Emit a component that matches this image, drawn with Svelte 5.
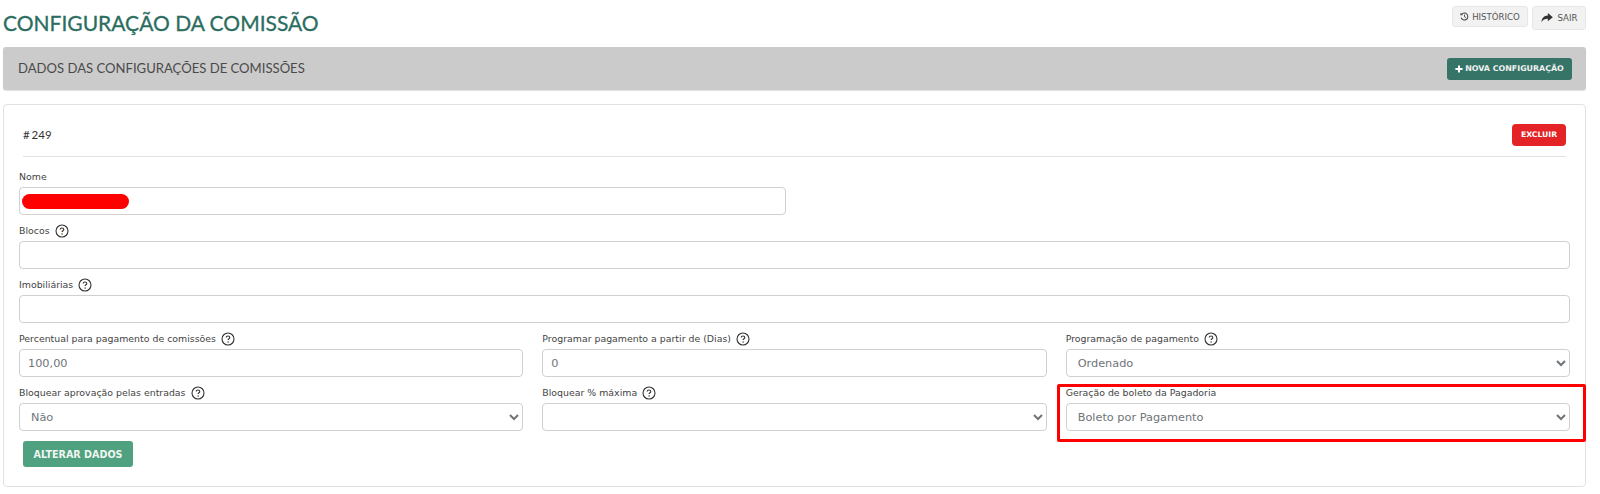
<script lang="ts">
  const topRow = [
    { label: 'Percentual para pagamento de comissões', value: '100,00', help: true },
    { label: 'Programar pagamento a partir de (Dias)', value: '0', help: true },
    { label: 'Programação de pagamento', options: ['Ordenado'], help: true }
  ];
  const bottomRow = [
    { label: 'Bloquear aprovação pelas entradas', options: ['Não'], help: true },
    { label: 'Bloquear % máxima', options: [''], help: true },
    { label: 'Geração de boleto da Pagadoria', options: ['Boleto por Pagamento'], help: false, marked: true }
  ];
</script>

{#snippet help()}
  <svg class="help" viewBox="0 0 14 14" width="14" height="14" aria-hidden="true">
    <circle cx="7" cy="7" r="6" fill="none" stroke="#333" stroke-width="1.1" />
    <path d="M5.2 5.6c0-1 .8-1.6 1.8-1.6s1.8.6 1.8 1.5c0 1.3-1.7 1.3-1.7 2.6" fill="none" stroke="#333" stroke-width="1.1" />
    <circle cx="7.1" cy="10" r=".7" fill="#333" />
  </svg>
{/snippet}

{#snippet field(f)}
  <div class="field" class:marked={f.marked}>
    <label>
      <span class="label-text">{f.label}{#if f.help}{@render help()}{/if}</span>
      {#if f.options}
        <select class="control">
          {#each f.options as o}<option>{o}</option>{/each}
        </select>
      {:else}
        <input class="control" value={f.value ?? ''} />
      {/if}
    </label>
  </div>
{/snippet}

<div class="page">
  <header class="top">
    <h1>CONFIGURAÇÃO DA COMISSÃO</h1>
    <div class="top-actions">
      <button class="btn-light history">
        <svg viewBox="0 0 12 12" width="9" height="9" aria-hidden="true">
          <path d="M2.2 3.2A4.6 4.6 0 1 1 1.5 7.5" fill="none" stroke="#444" stroke-width="1.4" />
          <path d="M.6 1v3.4H4z" fill="#444" />
          <path d="M6 3.4v3l2 1" fill="none" stroke="#444" stroke-width="1.2" />
        </svg>
        HISTÓRICO
      </button>
      <button class="btn-light exit">
        <svg viewBox="0 0 14 12" width="12" height="10" aria-hidden="true">
          <path d="M8 0l6 5-6 5V7C4.500 7 2 8 .5 11c0-4.500 2.500-7.800 7.500-8z" fill="#333" />
        </svg>
        SAIR
      </button>
    </div>
  </header>

  <section class="bar">
    <h2>DADOS DAS CONFIGURAÇÕES DE COMISSÕES</h2>
    <button class="btn-new">
      <svg viewBox="0 0 10 10" width="8" height="8" aria-hidden="true">
        <path d="M5 .5v9M.5 5h9" stroke="#fff" stroke-width="2.400" />
      </svg>
      NOVA CONFIGURAÇÃO
    </button>
  </section>

  <section class="card">
    <div class="card-head">
      <span class="record"># 249</span>
      <button class="btn-delete">EXCLUIR</button>
    </div>

    <div class="form">
      <div class="field name">
        <label>
          <span class="label-text">Nome</span>
          <input class="control" />
        </label>
        <span class="redaction"></span>
      </div>
      {@render field({ label: 'Blocos', value: '', help: true })}
      {@render field({ label: 'Imobiliárias', value: '', help: true })}
      <div class="columns">
        {#each topRow as f}{@render field(f)}{/each}
        {#each bottomRow as f}{@render field(f)}{/each}
      </div>
    </div>

    <button class="btn-save">ALTERAR DADOS</button>
  </section>
</div>

<style>
  :global(body) {
    margin: 0;
    background: #fff;
  }

  .page {
    height: 494px;
    box-sizing: border-box;
    padding: 0 14px 0 3px;
    font-family: "DejaVu Sans", sans-serif;
    color: #333;
  }

  .top {
    display: flex;
    justify-content: space-between;
    align-items: flex-start;
    height: 47px;
  }

  h1 {
    margin: 9px 0 0;
    font: 400 21px/28px Lato, sans-serif;
    color: #2b6d60;
    -webkit-text-stroke: 0.3px #2b6d60;
  }

  .top-actions {
    display: flex;
    align-items: flex-start;
    gap: 4px;
    padding-top: 6px;
  }

  .btn-light {
    display: flex;
    align-items: center;
    justify-content: center;
    gap: 3px;
    padding: 0;
    background: #f2f2f2;
    border: 1px solid #e6e6e6;
    border-radius: 3px;
    font: 400 8.600px "DejaVu Sans", sans-serif;
    color: #555;
  }

  .history {
    width: 76px;
    height: 21px;
  }

  .exit {
    width: 54px;
    height: 24px;
    gap: 5px;
  }

  .bar {
    display: flex;
    align-items: center;
    justify-content: space-between;
    height: 43px;
    box-sizing: border-box;
    padding: 0 14px 0 15px;
    background: #cbcbcb;
    border-radius: 3px;
    box-shadow: 0 1px 1px #e2e2e2;
  }

  h2 {
    margin: 0 0 2px;
    font: 400 13.100px Lato, sans-serif;
    color: #4a4a4a;
  }

  .btn-new {
    display: flex;
    align-items: center;
    justify-content: center;
    gap: 2px;
    width: 125px;
    height: 22px;
    padding: 0;
    background: #357467;
    border: none;
    border-radius: 3px;
    font: 700 7.900px "DejaVu Sans", sans-serif;
    color: #f2f2f2;
  }

  .card {
    height: 383px;
    box-sizing: border-box;
    margin-top: 14px;
    padding: 0 15px;
    border: 1px solid #e2e2e2;
    border-radius: 4px;
  }

  .card-head {
    display: flex;
    align-items: center;
    justify-content: space-between;
    height: 51px;
    margin: 0 4px;
    border-bottom: 1px solid #e2e2e2;
  }

  .record {
    font: 400 11.500px Lato, sans-serif;
    word-spacing: -1px;
    color: #333;
    margin-top: 8px;
  }

  .btn-delete {
    width: 54px;
    height: 22px;
    margin-top: 8px;
    padding: 0;
    background: #e32326;
    border: none;
    border-radius: 4px;
    font: 700 7.700px "DejaVu Sans", sans-serif;
    color: #fff;
  }

  .form {
    display: flex;
    flex-direction: column;
    gap: 10px;
    margin-top: 14px;
  }

  .field {
    position: relative;
  }

  .field label {
    display: block;
  }

  .label-text {
    display: flex;
    align-items: center;
    gap: 5px;
    height: 11px;
    margin-bottom: 5px;
    font-size: 9.400px;
    color: #444;
  }

  .help {
    display: block;
  }

  .control {
    display: block;
    width: 100%;
    height: 28px;
    box-sizing: border-box;
    margin: 0;
    padding: 0 8px;
    background: #fff;
    border: 1px solid #d0d0d0;
    border-radius: 4px;
    font: 400 11.300px "DejaVu Sans", sans-serif;
    color: #6f7479;
  }

  select.control {
    padding: 0 7px;
  }

  .name .control {
    width: 767px;
  }

  .redaction {
    position: absolute;
    left: 3px;
    top: 23px;
    width: 107px;
    height: 15px;
    background: #fe0000;
    border-radius: 8px;
  }

  .columns {
    display: grid;
    grid-template-columns: repeat(3, 1fr);
    gap: 10px 19px;
  }

  .marked::after {
    content: '';
    position: absolute;
    inset: -3px -16px -11px -9px;
    border: 3px solid #fe0000;
    border-radius: 2px;
    pointer-events: none;
  }

  .btn-save {
    display: block;
    width: 110px;
    height: 26px;
    margin: 10px 0 0 4px;
    padding: 0;
    background: #4fa17f;
    border: none;
    border-radius: 3px;
    font: 700 9.600px "DejaVu Sans", sans-serif;
    color: #f0f5f2;
  }
</style>
